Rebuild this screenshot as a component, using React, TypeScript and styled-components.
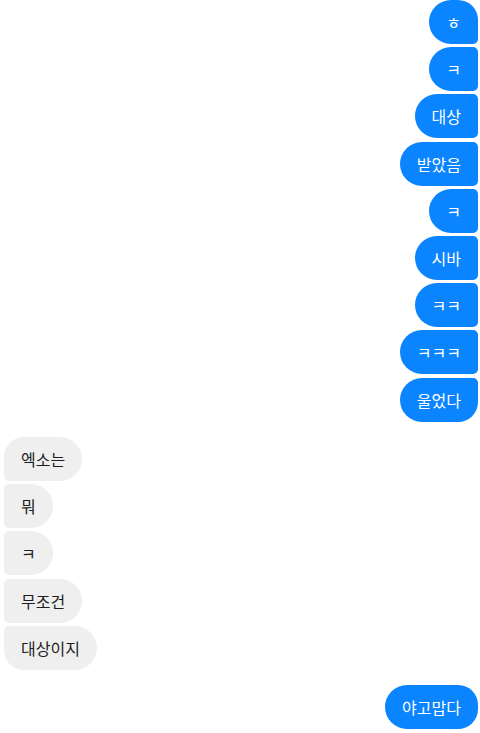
import styled, { createGlobalStyle } from "styled-components";

type Side = "me" | "them";
type Msg = { id: number; side: Side; text: string };

const messages: Msg[] = [
  { id: 1, side: "me", text: "ㅎ" },
  { id: 2, side: "me", text: "ㅋ" },
  { id: 3, side: "me", text: "대상" },
  { id: 4, side: "me", text: "받았음" },
  { id: 5, side: "me", text: "ㅋ" },
  { id: 6, side: "me", text: "시바" },
  { id: 7, side: "me", text: "ㅋㅋ" },
  { id: 8, side: "me", text: "ㅋㅋㅋ" },
  { id: 9, side: "me", text: "울었다" },
  { id: 10, side: "them", text: "엑소는" },
  { id: 11, side: "them", text: "뭐" },
  { id: 12, side: "them", text: "ㅋ" },
  { id: 13, side: "them", text: "무조건" },
  { id: 14, side: "them", text: "대상이지" },
  { id: 15, side: "me", text: "야고맙다" },
];

// group consecutive messages from the same side
const groupMessages = (list: Msg[]) => {
  const groups: { side: Side; items: Msg[] }[] = [];
  list.forEach((m) => {
    const last = groups[groups.length - 1];
    if (last && last.side === m.side) last.items.push(m);
    else groups.push({ side: m.side, items: [m] });
  });
  return groups;
};

const App = () => {
  const groups = groupMessages(messages);
  return (
    <>
      <GlobalStyle />
      <Thread>
        {groups.map((g, gi) => (
          <Group key={gi} $side={g.side}>
            {g.items.map((m, i) => (
              <Bubble
                key={m.id}
                $side={g.side}
                $first={i === 0}
                $last={i === g.items.length - 1}
              >
                {m.text}
              </Bubble>
            ))}
          </Group>
        ))}
      </Thread>
    </>
  );
};

export default App;

const GlobalStyle = createGlobalStyle`
  body {
    margin: 0;
    background: #fff;
    font-family: "Noto Sans CJK KR", "Noto Sans", sans-serif;
  }
`;

const Thread = styled.div`
  display: flex;
  flex-direction: column;
  gap: 15.5px;
  padding: 0 2px 0 4px;
`;

const Group = styled.div<{ $side: Side }>`
  display: flex;
  flex-direction: column;
  gap: 3.2px;
  align-items: ${(p) => (p.$side === "me" ? "flex-end" : "flex-start")};
`;

const Bubble = styled.div<{ $side: Side; $first: boolean; $last: boolean }>`
  box-sizing: border-box;
  height: 44px;
  padding: 11px 17px;
  font-size: 16px;
  line-height: 22px;
  white-space: nowrap;
  background: ${(p) => (p.$side === "me" ? "#0a84ff" : "#efefef")};
  color: ${(p) => (p.$side === "me" ? "#fff" : "#1e1e1e")};
  border-radius: ${(p) => {
    const top = p.$first ? "20px" : "5px";
    const bottom = p.$last ? "20px" : "5px";
    return p.$side === "me"
      ? `22px ${top} ${bottom} 22px`
      : `${top} 22px 22px ${bottom}`;
  }};
`;
